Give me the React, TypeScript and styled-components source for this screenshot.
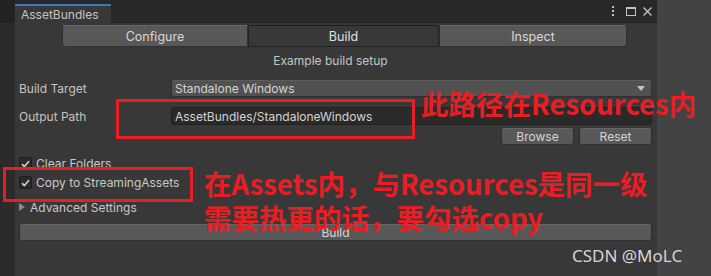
import React from "react";
import styled, { createGlobalStyle } from "styled-components";

const Global = createGlobalStyle`
  html, body { margin: 0; padding: 0; background: #383838; }
  body { width: 711px; height: 276px; overflow: hidden; }
  * { box-sizing: border-box; }
`;

const UI_FONT = `Inter, "Noto Sans", "Liberation Sans", sans-serif`;
const CJK_FONT = `"Noto Sans CJK SC", "Noto Sans", sans-serif`;
const RED = "#e91e25";

const Page = styled.div`
  position: relative;
  width: 711px;
  height: 276px;
  display: flex;
  font-family: ${UI_FONT};
  font-size: 12px;
  color: #c8c8c8;
  overflow: hidden;
`;

const LeftStrip = styled.div`
  width: 15px;
  background: #2b2b2b;
  display: flex;
  flex-direction: column;
`;

const LeftStripTop = styled.div`
  height: 23px;
  background: #232323;
`;

const RightStrip = styled.div`
  flex: 1;
  background: #434343;
`;

const Window = styled.div`
  width: 642px;
  display: flex;
  flex-direction: column;
  background: #383838;
`;

const TitleBar = styled.div`
  height: 23px;
  background: #282828;
  display: flex;
  align-items: flex-end;
  border-bottom: 1px solid #232323;
`;

const Tab = styled.div`
  width: 96px;
  height: 19px;
  background: #383838;
  border-top: 2px solid #3a79bb;
  padding-left: 6px;
  display: flex;
  align-items: center;
  color: #c4c4c4;
  font-size: 12px;
  margin-bottom: -1px;
`;

const TitleIcons = styled.div`
  margin-left: auto;
  display: flex;
  align-items: center;
  gap: 7px;
  height: 22px;
  padding-right: 5px;
  color: #c4c4c4;
`;

const Body = styled.div`
  flex: 1;
  display: flex;
  flex-direction: column;
  padding: 2px 5px 0 4px;
`;

const Segmented = styled.div`
  display: flex;
  margin-left: 43px;
  width: 565px;
  height: 22px;
`;

const SegButton = styled.div<{ $w: number; $active?: boolean }>`
  width: ${(p) => p.$w}px;
  display: flex;
  align-items: center;
  justify-content: center;
  font-size: 12.5px;
  color: ${(p) => (p.$active ? "#e0e0e0" : "#d8d8d8")};
  background: ${(p) => (p.$active ? "#383838" : "#585858")};
  border: 1px solid ${(p) => (p.$active ? "#232323" : "#303030")};
  border-top-color: ${(p) => (p.$active ? "#1e1e1e" : "#656565")};
  &:first-child { border-radius: 3px 0 0 3px; }
  &:last-child { border-radius: 0 3px 3px 0; }
`;

const Caption = styled.div`
  text-align: center;
  height: 16px;
  line-height: 16px;
  margin-top: 6px;
  margin-left: -10px;
  color: #c4c4c4;
`;

const Row = styled.div<{ $mt: number; $h: number }>`
  display: flex;
  align-items: center;
  margin-top: ${(p) => p.$mt}px;
  height: ${(p) => p.$h}px;
`;

const Label = styled.div`
  width: 152px;
  color: #c4c4c4;
`;

const Dropdown = styled.div`
  flex: 1;
  height: 100%;
  background: #515151;
  border: 1px solid #303030;
  border-top-color: #5d5d5d;
  border-radius: 3px;
  display: flex;
  align-items: center;
  padding-left: 3px;
  padding-right: 6px;
  color: #d4d4d4;
`;

const Arrow = styled.div`
  margin-left: auto;
  width: 0;
  height: 0;
  border-left: 4px solid transparent;
  border-right: 4px solid transparent;
  border-top: 5px solid #c4c4c4;
`;

const TextField = styled.div`
  flex: 1;
  height: 100%;
  background: #2a2a2a;
  border: 1px solid #212121;
  border-radius: 3px;
  display: flex;
  align-items: center;
  padding-left: 3px;
  color: #d4d4d4;
`;

const ButtonRow = styled.div`
  display: flex;
  justify-content: flex-end;
  gap: 5px;
  margin-top: 3px;
  height: 17px;
`;

const SmallButton = styled.div`
  width: 73px;
  height: 100%;
  background: #585858;
  border: 1px solid #303030;
  border-top-color: #656565;
  border-radius: 3px;
  display: flex;
  align-items: center;
  justify-content: center;
  color: #d4d4d4;
`;

const CheckRow = styled.div<{ $mt: number }>`
  display: flex;
  align-items: center;
  height: 13px;
  margin-top: ${(p) => p.$mt}px;
  gap: 4px;
  color: #c8c8c8;
`;

const Box = styled.div`
  width: 13px;
  height: 13px;
  background: #2a2a2a;
  border: 1px solid #1c1c1c;
  border-radius: 2px;
  display: flex;
  align-items: center;
  justify-content: center;
`;

const Foldout = styled.div`
  display: flex;
  align-items: center;
  height: 14px;
  margin-top: 11px;
  gap: 5px;
  color: #c8c8c8;
`;

const Triangle = styled.div`
  width: 0;
  height: 0;
  border-top: 4px solid transparent;
  border-bottom: 4px solid transparent;
  border-left: 6px solid #8a8a8a;
`;

const WideButton = styled.div`
  margin-top: 10px;
  height: 17px;
  background: #585858;
  border: 1px solid #303030;
  border-top-color: #656565;
  border-radius: 3px;
  display: flex;
  align-items: center;
  justify-content: center;
  color: #d8d8d8;
`;

const RedBox = styled.div<{ $x: number; $y: number; $w: number; $h: number }>`
  position: absolute;
  left: ${(p) => p.$x}px;
  top: ${(p) => p.$y}px;
  width: ${(p) => p.$w}px;
  height: ${(p) => p.$h}px;
  border: 3px solid ${RED};
`;

const Note = styled.div<{ $x: number; $y: number; $size: number }>`
  position: absolute;
  left: ${(p) => p.$x}px;
  top: ${(p) => p.$y}px;
  font-family: ${CJK_FONT};
  font-weight: 700;
  font-size: ${(p) => p.$size}px;
  line-height: 1;
  color: ${RED};
  white-space: nowrap;
`;

const Watermark = styled.div`
  position: absolute;
  left: 572px;
  top: 244px;
  font-family: "Noto Sans", "DejaVu Sans", sans-serif;
  font-size: 17px;
  color: #d6d6d6;
  white-space: nowrap;
`;

const Check = () => (
  <svg width="9" height="8" viewBox="0 0 9 8">
    <path d="M1 4.2 L3.4 6.5 L8 1.2" stroke="#d0d0d0" strokeWidth="1.6" fill="none" />
  </svg>
);

export default function App() {
  return (
    <>
      <Global />
      <Page>
        <LeftStrip>
          <LeftStripTop />
        </LeftStrip>
        <Window>
          <TitleBar>
            <Tab>AssetBundles</Tab>
            <TitleIcons>
              <svg width="4" height="10" viewBox="0 0 4 10">
                <rect x="1" y="0" width="2" height="2" fill="#c4c4c4" />
                <rect x="1" y="4" width="2" height="2" fill="#c4c4c4" />
                <rect x="1" y="8" width="2" height="2" fill="#c4c4c4" />
              </svg>
              <svg width="10" height="9" viewBox="0 0 10 9" style={{ marginLeft: 4 }}>
                <rect x="0.5" y="0.5" width="9" height="8" fill="none" stroke="#c4c4c4" />
                <rect x="0" y="0" width="10" height="2" fill="#c4c4c4" />
              </svg>
              <svg width="9" height="9" viewBox="0 0 9 9">
                <path d="M0.5 0.5 L8.5 8.5 M8.5 0.5 L0.5 8.5" stroke="#c4c4c4" strokeWidth="1.3" />
              </svg>
            </TitleIcons>
          </TitleBar>
          <Body>
            <Segmented>
              <SegButton $w={186}>Configure</SegButton>
              <SegButton $w={191} $active>Build</SegButton>
              <SegButton $w={188}>Inspect</SegButton>
            </Segmented>
            <Caption>Example build setup</Caption>
            <Row $mt={11} $h={17}>
              <Label>Build Target</Label>
              <Dropdown>
                Standalone Windows
                <Arrow />
              </Dropdown>
            </Row>
            <Row $mt={10} $h={18}>
              <Label>Output Path</Label>
              <TextField>AssetBundles/StandaloneWindows</TextField>
            </Row>
            <ButtonRow>
              <SmallButton>Browse</SmallButton>
              <SmallButton>Reset</SmallButton>
            </ButtonRow>
            <CheckRow $mt={12}>
              <Box><Check /></Box>
              Clear Folders
            </CheckRow>
            <CheckRow $mt={6}>
              <Box><Check /></Box>
              Copy to StreamingAssets
            </CheckRow>
            <Foldout>
              <Triangle />
              Advanced Settings
            </Foldout>
            <WideButton>Build</WideButton>
          </Body>
        </Window>
        <RightStrip />
        <RedBox $x={116} $y={99} $w={299} $h={40} />
        <RedBox $x={3} $y={167} $w={190} $h={35} />
        <Note $x={421} $y={90} $size={27.5}>此路径在Resources内</Note>
        <Note $x={204} $y={170} $size={27.5}>在Assets内，与Resources是同一级</Note>
        <Note $x={204} $y={204} $size={27.5}>需要热更的话，要勾选copy</Note>
        <Watermark>CSDN @MoLC</Watermark>
      </Page>
    </>
  );
}
